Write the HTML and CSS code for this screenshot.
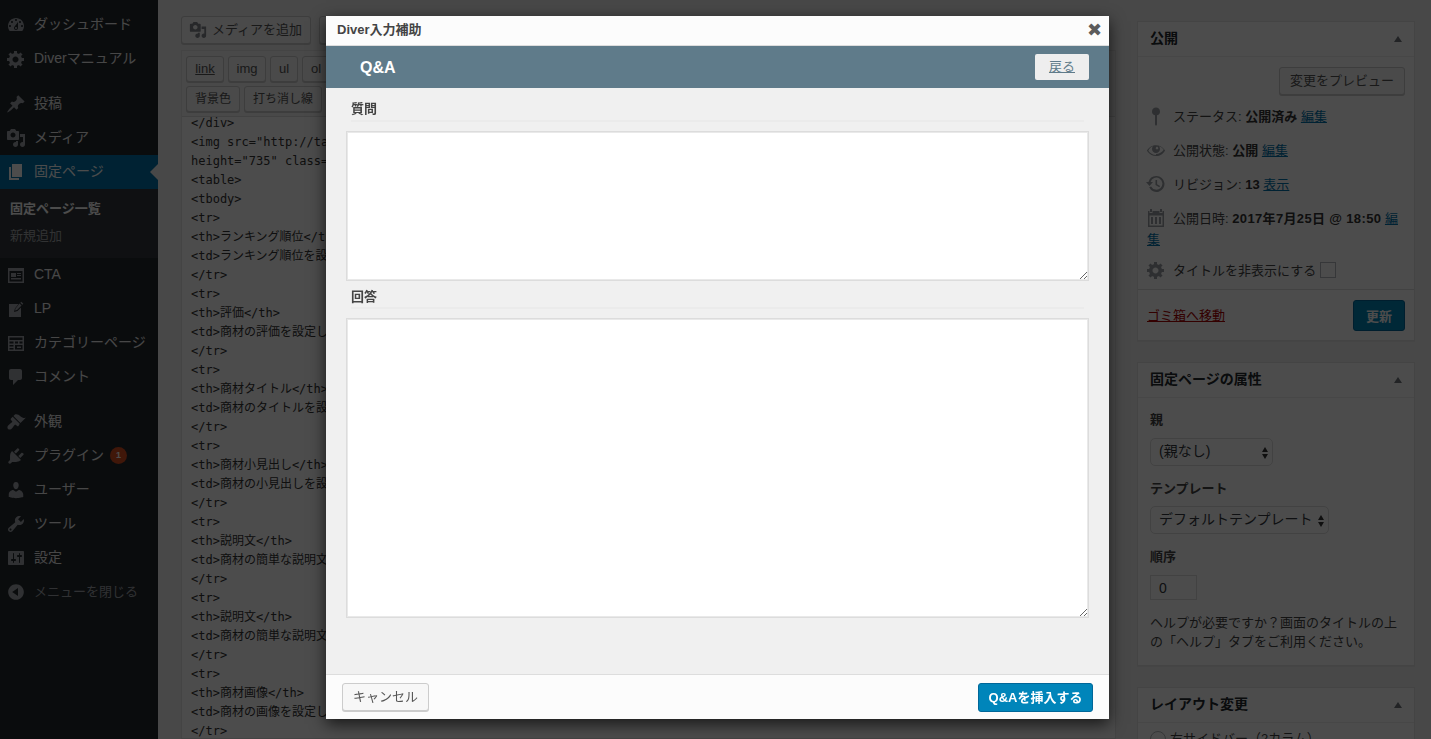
FILE: index.html
```html
<!DOCTYPE html>
<html lang="ja">
<head>
<meta charset="utf-8">
<title>固定ページを編集</title>
<link rel="stylesheet" href="styles.css">
</head>
<body>
<svg class="defs" width="0" height="0" aria-hidden="true">
  <symbol id="i-dash" viewBox="0 0 20 20"><path d="M3.76 16h12.48c1.1-1.37 1.76-3.11 1.76-5 0-4.42-3.58-8-8-8s-8 3.58-8 8c0 1.89.66 3.63 1.76 5zM10 4c.55 0 1 .45 1 1s-.45 1-1 1-1-.45-1-1 .45-1 1-1zM6 6c.55 0 1 .45 1 1s-.45 1-1 1-1-.45-1-1 .45-1 1-1zm8 0c.55 0 1 .45 1 1s-.45 1-1 1-1-.45-1-1 .45-1 1-1zm-5.37 5.55L12 7v6c0 1.1-.9 2-2 2s-2-.9-2-2c0-.57.24-1.08.63-1.45zM4 10c.55 0 1 .45 1 1s-.45 1-1 1-1-.45-1-1 .45-1 1-1zm12 0c.55 0 1 .45 1 1s-.45 1-1 1-1-.45-1-1 .45-1 1-1zm-5 3c0-.55-.45-1-1-1s-1 .45-1 1 .45 1 1 1 1-.45 1-1z"/></symbol>
  <symbol id="i-gear" viewBox="0 0 20 20"><path d="M18 12h-2.18c-.17.7-.44 1.35-.81 1.93l1.54 1.54-2.1 2.1-1.54-1.54c-.58.36-1.23.63-1.91.79V19H8v-2.18c-.68-.16-1.33-.43-1.91-.79l-1.54 1.54-2.12-2.12 1.54-1.54c-.36-.58-.63-1.23-.79-1.91H1V9.03h2.17c.16-.7.44-1.35.8-1.94L2.43 5.55l2.1-2.1 1.54 1.54c.58-.37 1.24-.64 1.93-.81V2h3v2.18c.68.16 1.33.43 1.91.79l1.54-1.54 2.12 2.12-1.54 1.54c.36.59.64 1.24.8 1.94H18V12zm-8.5 1.5c1.66 0 3-1.34 3-3s-1.34-3-3-3-3 1.34-3 3 1.34 3 3 3z"/></symbol>
  <symbol id="i-pin" viewBox="0 0 20 20"><path d="M10.44 3.02l1.82-1.82 6.36 6.35-1.83 1.82c-1.05-.68-2.48-.57-3.41.36l-.75.75c-.92.93-1.04 2.35-.35 3.41l-1.83 1.82-2.41-2.41-2.8 2.79c-.42.42-3.38 2.71-3.8 2.29s1.86-3.39 2.28-3.81l2.79-2.79L4.1 9.36l1.83-1.82c1.05.69 2.48.57 3.4-.36l.75-.75c.93-.92 1.05-2.35.36-3.41z"/></symbol>
  <symbol id="i-media" viewBox="0 0 20 20"><path d="M13 11V4c0-.55-.45-1-1-1h-1.67L9 1H5L3.67 3H2c-.55 0-1 .45-1 1v7c0 .55.45 1 1 1h10c.55 0 1-.45 1-1zM7 4.5c1.38 0 2.5 1.12 2.5 2.5S8.38 9.5 7 9.5 4.5 8.38 4.5 7 5.62 4.5 7 4.5zM14 6h5v10.5c0 1.38-1.12 2.5-2.5 2.5S14 17.88 14 16.5s1.12-2.5 2.5-2.5c.17 0 .34.02.5.05V9h-3V6zm-4 8.05V13h2v3.5c0 1.38-1.12 2.5-2.5 2.5S7 17.88 7 16.5 8.12 14 9.5 14c.17 0 .34.02.5.05z"/></symbol>
  <symbol id="i-page" viewBox="0 0 20 20"><path d="M6 15V2h10v13H6zm-1 1h8v2H3V5h2v11z"/></symbol>
  <symbol id="i-cta" viewBox="0 0 20 20"><path fill-rule="evenodd" d="M2 3h16v15H2zM3.500 6v10.500h13V6zM5 8h5v4H5zM11 8h4v1h-4zM11 10h4v1h-4zM5 13h10v1.500H5z"/></symbol>
  <symbol id="i-lp" viewBox="0 0 20 20"><path d="M3 5h9.500L9 9.500 8 13l3.500-1L15 8.500V18H3zM13.500 4.500l2 2L11 11l-2 .5.500-2zM14.300 3.700l1-1 2 2-1 1z"/></symbol>
  <symbol id="i-cat" viewBox="0 0 20 20"><path fill-rule="evenodd" d="M2 3h16v15H2zM3.500 4.500V7h13V4.500zM3.500 8.500v2h4v-2zM9 8.500v2h3v-2zM13.500 8.500v2h3v-2zM3.500 12v1.500h4V12zM9 12v4.500h7.500V12zM3.500 15v1.500h4V15zM11 13.500h4V15h-4z"/></symbol>
  <symbol id="i-comment" viewBox="0 0 20 20"><path d="M5 2h9c1.100 0 2 .9 2 2v7c0 1.100-.9 2-2 2h-2l-5 5v-5H5c-1.100 0-2-.9-2-2V4c0-1.100.9-2 2-2z"/></symbol>
  <symbol id="i-brush" viewBox="0 0 20 20"><path d="M14.480 11.060L7.410 3.990l1.500-1.500c.5-.56 2.300-.47 3.510.32 1.210.8 1.430 1.280 2.910 2.100 1.180.64 2.450 1.260 4.450.85zM13.770 11.770L6.700 4.700 4.930 6.470c-.39.39-.39 1.020 0 1.410l1.060 1.060c.39.39.39 1.030 0 1.420-.6.6-1.430 1.110-2.210 1.690-.35.26-.7.53-1.010.84C1.430 13.710.96 15.650 1.980 17c1.350 1.020 3.290.55 4.110-.8.310-.31.580-.66.840-1.010.58-.78 1.090-1.610 1.690-2.210.39-.39 1.030-.39 1.420 0l1.060 1.060c.39.39 1.020.39 1.410 0z"/></symbol>
  <symbol id="i-plug" viewBox="0 0 20 20"><path d="M13.110 4.360L9.870 7.600 8 5.730l3.240-3.240c.35-.34 1.050-.2 1.560.32.52.51.66 1.210.31 1.550zm-8 1.770l.91-1.120 9.010 9.010-1.190.84c-.71.71-2.630 1.160-3.820 1.160H6.140L4.900 17.260c-.59.59-1.540.59-2.120 0-.59-.58-.59-1.530 0-2.120l1.240-1.240v-3.880c0-1.130.4-3.190 1.090-3.890zm7.260 3.970l3.240-3.240c.34-.35 1.040-.21 1.550.31.52.51.66 1.210.31 1.550l-3.240 3.250z"/></symbol>
  <symbol id="i-user" viewBox="0 0 20 20"><path d="M10 9.250c-2.270 0-2.730-3.440-2.730-3.440C7 4.020 7.820 2 9.970 2c2.160 0 2.980 2.020 2.710 3.810 0 0-.41 3.440-2.680 3.440zm0 2.570L12.720 10c2.390 0 4.520 2.330 4.520 4.530v2.490s-3.650 1.130-7.240 1.130c-3.650 0-7.240-1.130-7.240-1.130v-2.490c0-2.250 1.940-4.480 4.470-4.480z"/></symbol>
  <symbol id="i-tool" viewBox="0 0 20 20"><path d="M16.680 9.770c-1.340 1.340-3.300 1.670-4.950.99l-5.410 6.520c-.99.99-2.590.99-3.580 0s-.99-2.590 0-3.570l6.520-5.420c-.68-1.650-.35-3.610.99-4.950 1.280-1.280 3.120-1.620 4.720-1.060l-2.890 2.890 2.820 2.820 2.860-2.870c.53 1.580.18 3.390-1.080 4.650zM3.810 16.210c.4.39 1.040.39 1.430 0 .4-.4.4-1.040 0-1.430-.39-.4-1.030-.4-1.430 0-.39.39-.39 1.030 0 1.430z"/></symbol>
  <symbol id="i-set" viewBox="0 0 20 20"><path d="M18 16V4c0-.55-.45-1-1-1H3c-.55 0-1 .45-1 1v12c0 .55.45 1 1 1h14c.55 0 1-.45 1-1zM8 11h1c.55 0 1 .45 1 1s-.45 1-1 1H8v1.500c0 .28-.22.5-.5.5s-.5-.22-.5-.5V13H6c-.55 0-1-.45-1-1s.45-1 1-1h1V5.500c0-.28.22-.5.5-.5s.5.22.5.5V11zm5-2h-1c-.55 0-1-.45-1-1s.45-1 1-1h1V5.500c0-.28.22-.5.5-.5s.5.22.5.5V7h1c.55 0 1 .45 1 1s-.45 1-1 1h-1v5.500c0 .28-.22.5-.5.5s-.5-.22-.5-.5V9z"/></symbol>
  <symbol id="i-collapse" viewBox="0 0 20 20"><path d="M10 2.160c4.330 0 7.840 3.510 7.840 7.840s-3.510 7.840-7.840 7.840S2.160 14.330 2.160 10 5.710 2.160 10 2.160zm2 11.720V6.120L6.180 9.970z"/></symbol>
  <symbol id="i-status" viewBox="0 0 20 20"><path d="M10 1.500a4 4 0 0 1 1 7.870V18.500l-1 1.500-1-1.500V9.370A4 4 0 0 1 10 1.500z"/></symbol>
  <symbol id="i-eye" viewBox="0 0 20 20"><path d="M18.300 9.500C15 4.900 8.500 3.800 3.900 7.200c-1.200.9-2.200 2.100-3 3.400.2.4.5.8.8 1.200 3.300 4.600 9.600 5.600 14.200 2.400.9-.7 1.700-1.400 2.400-2.400.3-.4.5-.8.8-1.200-.3-.4-.5-.8-.8-1.100zm-8.200-2.300c.5-.5 1.300-.5 1.800 0s.5 1.300 0 1.800-1.300.5-1.800 0-.5-1.300 0-1.800zm-.1 7.700c-3.100 0-6-1.600-7.700-4.200C3.500 8 5.100 6.800 7 6.200 6.300 7 6 7.900 6 8.900c0 2.200 1.700 4 4 4s4-1.700 4-4c0-1-.4-2-1-2.700 1.900.6 3.500 1.800 4.700 3.500-1.700 2.600-4.600 4.200-7.700 4.200z"/></symbol>
  <symbol id="i-history" viewBox="0 0 20 20"><path d="M10.500 2a8 8 0 1 1-7.300 11.300l1.900-.8A6 6 0 1 0 4.600 8H7l-3.500 4L0 8h2.500A8 8 0 0 1 10.500 2zM9.500 6h1.600v4.200l3 1.800-.8 1.300-3.800-2.300z"/></symbol>
  <symbol id="i-cal" viewBox="0 0 20 20"><path fill-rule="evenodd" d="M4 1h2v3H4zM14 1h2v3h-2zM2 3h1.500v2h3V3h7v2h3V3H18v16H2zM3.500 7.500V17.500h13V7.500zM5 9h2v7H5zM9 9h2v7H9zM13 9h2v7h-2z"/></symbol>
</svg>

<div class="admin">
  <aside class="menu">
    <a class="item"><svg class="ico"><use href="#i-dash"/></svg><span>ダッシュボード</span></a>
    <a class="item sep"><svg class="ico"><use href="#i-gear"/></svg><span>Diverマニュアル</span></a>
    <a class="item"><svg class="ico"><use href="#i-pin"/></svg><span>投稿</span></a>
    <a class="item"><svg class="ico"><use href="#i-media"/></svg><span>メディア</span></a>
    <a class="item current"><svg class="ico"><use href="#i-page"/></svg><span>固定ページ</span></a>
    <div class="sub">
      <a class="sub-on">固定ページ一覧</a>
      <a>新規追加</a>
    </div>
    <a class="item"><svg class="ico"><use href="#i-cta"/></svg><span>CTA</span></a>
    <a class="item"><svg class="ico"><use href="#i-lp"/></svg><span>LP</span></a>
    <a class="item"><svg class="ico"><use href="#i-cat"/></svg><span>カテゴリーページ</span></a>
    <a class="item sep"><svg class="ico"><use href="#i-comment"/></svg><span>コメント</span></a>
    <a class="item"><svg class="ico"><use href="#i-brush"/></svg><span>外観</span></a>
    <a class="item"><svg class="ico"><use href="#i-plug"/></svg><span>プラグイン</span><b class="badge">1</b></a>
    <a class="item"><svg class="ico"><use href="#i-user"/></svg><span>ユーザー</span></a>
    <a class="item"><svg class="ico"><use href="#i-tool"/></svg><span>ツール</span></a>
    <a class="item"><svg class="ico"><use href="#i-set"/></svg><span>設定</span></a>
    <a class="item dim"><svg class="ico"><use href="#i-collapse"/></svg><span>メニューを閉じる</span></a>
  </aside>

  <main class="content">
    <section class="editor">
      <div class="media-row">
        <button class="btn media-btn"><svg class="btn-ico"><use href="#i-media"/></svg>メディアを追加</button>
        <button class="btn stub" aria-label="ショートコード"></button>
      </div>
      <div class="ed-box">
        <div class="tags">
          <div class="tag-row">
            <button class="tag w38 under">link</button><button class="tag w38">img</button><button class="tag w28">ul</button><button class="tag w28">ol</button>
          </div>
          <div class="tag-row">
            <button class="tag jp w54">背景色</button><button class="tag jp w78">打ち消し線</button>
          </div>
        </div>
        <pre class="code">&lt;/div&gt;
&lt;img src="http://tarou
height="735" class="ali
&lt;table&gt;
&lt;tbody&gt;
&lt;tr&gt;
&lt;th&gt;ランキング順位&lt;/th&gt;
&lt;td&gt;ランキング順位を設
&lt;/tr&gt;
&lt;tr&gt;
&lt;th&gt;評価&lt;/th&gt;
&lt;td&gt;商材の評価を設定し
&lt;/tr&gt;
&lt;tr&gt;
&lt;th&gt;商材タイトル&lt;/th&gt;
&lt;td&gt;商材のタイトルを設
&lt;/tr&gt;
&lt;tr&gt;
&lt;th&gt;商材小見出し&lt;/th&gt;
&lt;td&gt;商材の小見出しを設
&lt;/tr&gt;
&lt;tr&gt;
&lt;th&gt;説明文&lt;/th&gt;
&lt;td&gt;商材の簡単な説明文
&lt;/tr&gt;
&lt;tr&gt;
&lt;th&gt;説明文&lt;/th&gt;
&lt;td&gt;商材の簡単な説明文
&lt;/tr&gt;
&lt;tr&gt;
&lt;th&gt;商材画像&lt;/th&gt;
&lt;td&gt;商材の画像を設定し
&lt;/tr&gt;</pre>
      </div>
    </section>

    <section class="side">
      <div class="box box-publish">
        <h2 class="box-h"><span>公開</span><i class="tri"></i></h2>
        <div class="preview-row"><button class="btn">変更をプレビュー</button></div>
        <p class="meta"><svg class="m-ico"><use href="#i-status"/></svg>ステータス: <b>公開済み</b> <a>編集</a></p>
        <p class="meta"><svg class="m-ico"><use href="#i-eye"/></svg>公開状態: <b>公開</b> <a>編集</a></p>
        <p class="meta"><svg class="m-ico"><use href="#i-history"/></svg>リビジョン: <b>13</b> <a>表示</a></p>
        <p class="meta meta-date"><svg class="m-ico"><use href="#i-cal"/></svg>公開日時: <b class="date">2017年7月25日 @ 18:50</b> <a>編集</a></p>
        <p class="meta"><svg class="m-ico"><use href="#i-gear"/></svg>タイトルを非表示にする <input class="check" type="checkbox"></p>
        <div class="actions"><a class="trash">ゴミ箱へ移動</a><button class="update">更新</button></div>
      </div>

      <div class="box box-attr">
        <h2 class="box-h"><span>固定ページの属性</span><i class="tri"></i></h2>
        <div class="attr">
          <h3 class="first">親</h3>
          <div class="sel sel-a"><select><option>(親なし)</option></select><i class="updown"></i></div>
          <h3>テンプレート</h3>
          <div class="sel sel-b"><select><option>デフォルトテンプレート</option></select><i class="updown"></i></div>
          <h3>順序</h3>
          <input class="order" type="text" value="0">
          <p class="help">ヘルプが必要ですか？画面のタイトルの上の「ヘルプ」タブをご利用ください。</p>
        </div>
      </div>

      <div class="box box-layout">
        <h2 class="box-h"><span>レイアウト変更</span><i class="tri"></i></h2>
        <label class="radio-row"><input class="radio" type="radio">右サイドバー（2カラム）</label>
      </div>
    </section>
  </main>
</div>

<div class="backdrop"></div>

<div class="modal">
  <header class="m-title"><span>Diver入力補助</span><b class="close">✖</b></header>
  <div class="m-head"><h1>Q&amp;A</h1><a class="back">戻る</a></div>
  <div class="m-body">
    <h4>質問</h4>
    <textarea class="ta ta-q"></textarea>
    <h4>回答</h4>
    <textarea class="ta ta-a"></textarea>
  </div>
  <footer class="m-foot">
    <button class="btn cancel">キャンセル</button>
    <button class="insert">Q&amp;Aを挿入する</button>
  </footer>
</div>
</body>
</html>
```

FILE: styles.css
```css
* { box-sizing: border-box; }
html, body { margin: 0; height: 739px; overflow: hidden; }
body {
  background: #f1f1f1;
  color: #444;
  font: 13px/19px "Liberation Sans", "Noto Sans CJK JP", sans-serif;
}
.defs { position: absolute; }
button, input, select, textarea { font-family: inherit; }

.admin { display: flex; height: 739px; overflow: hidden; }

/* admin menu */
.menu { flex: 0 0 158px; background: #23282d; padding-top: 8px; color: #eee; font-size: 14px; }
.item { display: flex; align-items: center; height: 34px; padding-left: 6px; gap: 8px; position: relative; }
.item span { padding-bottom: 2px; }
.item .ico { margin-top: -1px; }
.item.sep { margin-bottom: 11px; }
.ico { width: 20px; height: 20px; fill: #a0a5aa; flex: none; }
.current { background: #0073aa; color: #fff; }
.current .ico { fill: #fff; }
.current::after {
  content: ""; position: absolute; right: 0; top: 9px;
  border: 8px solid transparent; border-right-color: #f1f1f1; border-left: 0;
}
.sub { background: #32373c; height: 69px; padding-top: 11px; font-size: 13px; color: #a5a8ab; }
.sub a { display: block; height: 27px; line-height: 18px; padding-left: 10px; }
.sub .sub-on { color: #fff; font-weight: 700; }
.badge {
  width: 17px; height: 17px; border-radius: 50%; background: #d54e21; color: #fff;
  font-size: 9px; line-height: 17px; text-align: center; margin: -1px 0 0 -2px;
}
.dim { color: #a0a5aa; font-size: 13px; }

/* content */
.content { flex: 1; display: flex; padding: 0 16px 0 23px; gap: 21px; min-width: 0; }
.editor { flex: 0 0 935px; min-width: 0; padding-top: 16px; }
.media-row { display: flex; gap: 8px; }
.btn {
  height: 28px; padding: 0 10px; border: 1px solid #ccc; border-radius: 3px; background: #f7f7f7;
  box-shadow: 0 1px 0 #ccc; color: #555; font-size: 13px; line-height: 26px; white-space: nowrap;
}
.media-btn { display: flex; align-items: center; gap: 5px; width: 130px; padding: 0 7px; }
.stub { width: 20px; padding: 0; }
.btn-ico { width: 18px; height: 18px; fill: #82878c; flex: none; }
.ed-box { margin-top: 6px; border: 1px solid #e5e5e5; height: 689px; overflow: hidden; background: #fff; }
.tags {
  position: relative; display: flex; flex-direction: column; gap: 4px;
  height: 66px; padding: 5px 0 0 4px; background: #f5f5f5; border-bottom: 1px solid #ddd;
}
.tag-row { display: flex; gap: 4px; }
.tag {
  height: 26px; padding: 0; border: 1px solid #ccc; border-radius: 3px; background: #f7f7f7;
  color: #555; font-size: 13px; line-height: 24px; box-shadow: 0 1px 0 #ccc;
}
.jp { font-size: 12px; }
.w28 { width: 28px; }
.w38 { width: 38px; }
.w54 { width: 54px; }
.w78 { width: 78px; }
.under { text-decoration: underline; }
.code {
  width: 150px; height: 623px; margin: -3px 0 0; padding: 0 0 0 9px; color: #333;
  font: 12px/19px "DejaVu Sans Mono", "Noto Sans CJK JP", monospace;
  white-space: pre; overflow: hidden;
}

/* side */
.side { flex: 0 0 278px; padding-top: 21px; }
.box { background: #fff; border: 1px solid #e5e5e5; box-shadow: 0 1px 1px rgba(0,0,0,.04); margin-bottom: 21px; color: #444; }
.box-h {
  display: flex; justify-content: space-between; align-items: center;
  height: 35px; margin: 0; padding: 0 12px; border-bottom: 1px solid #eee;
  font-size: 14px; font-weight: 700; color: #23282d;
}
.box-h span { padding-bottom: 1px; }
.tri { width: 0; height: 0; border: 4px solid transparent; border-bottom: 6px solid #72777c; border-top: 0; }
.box-publish { height: 320px; }
.preview-row { display: flex; justify-content: flex-end; padding: 10px 9px 0 0; height: 49px; }
.meta { margin: 0 0 13px; padding: 0 14px 0 9px; line-height: 21px; }
.meta-date { margin-bottom: 10px; }
.meta a { color: #0073aa; text-decoration: underline; }
.meta b { color: #333; }
.meta .date { letter-spacing: .35px; }
.m-ico { width: 20px; height: 20px; fill: #9a9fa4; vertical-align: -5px; margin: 0 7px 0 -1px; }
.check {
  appearance: none; width: 16px; height: 16px; margin: 0; vertical-align: -3px;
  border: 1px solid #b4b9be; background: #fff;
}
.actions {
  display: flex; justify-content: space-between; align-items: center;
  border-top: 1px solid #ddd; height: 51px; margin-top: -5px; padding: 0 9px;
}
.trash { color: #a00; text-decoration: underline; }
.update {
  width: 52px; height: 31px; border: 1px solid #006799; border-radius: 3px; background: #0085ba;
  color: #fff; font-size: 13px; font-weight: 700; padding: 0;
}
.box-attr { height: 304px; }
.attr { padding: 0 12px; }
.attr h3 { margin: 0; font-size: 13px; line-height: 19px; font-weight: 700; color: #444; padding: 13px 0 8px; }
.attr h3.first { padding: 12px 0 9px; }
.sel { position: relative; }
.sel select {
  appearance: none; display: block; height: 28px; border: 1px solid #ddd; border-radius: 5px;
  background: #fff; color: #32373c; font-size: 14px; padding: 0 8px 2px; width: 100%;
}
.sel-a { width: 123px; }
.sel-b { width: 179px; }
.updown {
  position: absolute; right: 5px; top: 9px; width: 0; height: 0;
  border: 3.500px solid transparent; border-bottom: 5px solid #333; border-top: 0;
}
.updown::after {
  content: ""; position: absolute; left: -3.500px; top: 7px; width: 0; height: 0;
  border: 3.500px solid transparent; border-top: 5px solid #333; border-bottom: 0;
}
.order {
  display: block; width: 47px; height: 25px; margin-top: 1px; border: 1px solid #ddd; background: #fff;
  color: #32373c; font-size: 14px; padding: 0 8px;
}
.help { margin: 13px 0 0; line-height: 19px; }
.box-layout { height: 52px; margin-bottom: 0; border-bottom: 0; overflow: hidden; }
.radio-row { display: flex; align-items: center; gap: 4px; padding: 6px 12px; }
.radio { appearance: none; width: 16px; height: 16px; margin: 0; border-radius: 50%; border: 1px solid #b4b9be; background: #fff; }

/* overlay */
.backdrop { position: fixed; inset: 0; background: rgba(0,0,0,.7); }
.modal {
  position: absolute; left: 326px; top: 16px; width: 783px; height: 703px;
  display: flex; flex-direction: column; background: #f0f0f0; box-shadow: 0 5px 15px rgba(0,0,0,.7);
}
.m-title {
  display: flex; justify-content: space-between; align-items: center; flex: 0 0 30px;
  padding: 0 7px 2px 11px; background: #fcfcfc; border-bottom: 1px solid #ddd;
  font-size: 13px; font-weight: 700; color: #444;
}
.close { font-size: 18px; color: #5c5c5c; line-height: 1; font-family: "DejaVu Sans", sans-serif; }
.m-head {
  display: flex; justify-content: space-between; align-items: center; flex: 0 0 42px;
  padding: 0 20px 0 34px; background: #5f7b8a;
}
.m-head h1 { margin: 0; font-size: 16px; font-weight: 700; color: #fff; }
.back {
  width: 54px; height: 26px; background: #eee; border-radius: 2px; text-align: center;
  line-height: 26px; color: #5f7b8a; text-decoration: underline; font-size: 13px;
}
.m-body { flex: 1; padding: 11px 20px 0; }
.m-body h4 {
  margin: 0 5px 9px; height: 23px; line-height: 19px; font-size: 13px; font-weight: 700; color: #444;
  border-bottom: 2px solid #ebebeb;
}
.m-body .ta-q + h4 { height: 22px; }
.ta {
  display: block; width: 743px; border: 1px solid #dcdcdc; background: #fff; margin-bottom: 6px;
  box-shadow: 0 0 0 1px #e9e9e9 inset;
}
.ta-q { height: 150px; }
.ta-a { height: 300px; }
.m-foot {
  display: flex; justify-content: space-between; align-items: center; flex: 0 0 45px;
  padding: 0 16px; background: #fcfcfc; border-top: 1px solid #ddd;
}
.cancel { width: 87px; padding: 0; }
.insert {
  width: 115px; height: 29px; padding: 0 0 2px; border: 1px solid #006799; border-radius: 3px; background: #0085ba;
  color: #fff; font-size: 13px; font-weight: 700;
}
```
